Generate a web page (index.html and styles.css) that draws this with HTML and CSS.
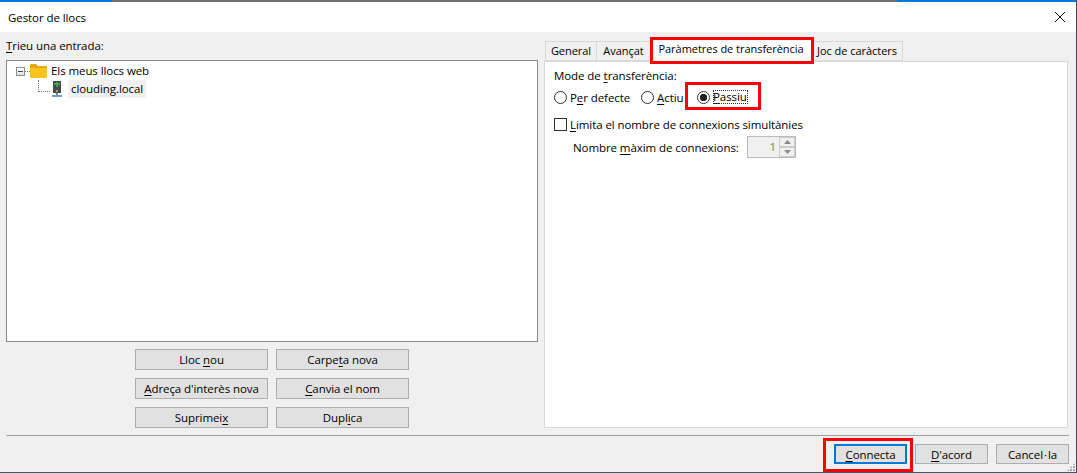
FILE: index.html
```html
<!DOCTYPE html>
<html lang="ca">
<head>
<meta charset="utf-8">
<title>Gestor de llocs</title>
<link rel="stylesheet" href="styles.css">
</head>
<body>
<div class="window">
  <div class="topline"><span class="topline-blue"></span><span class="topline-blue end"></span></div>
  <header class="titlebar">
    <span class="title">Gestor de llocs</span>
    <svg class="close" width="12" height="12" viewBox="0 0 12 12"><path d="M1 1L11 11M11 1L1 11" stroke="#111" stroke-width="1" fill="none"/></svg>
  </header>
  <div class="client">
    <div class="columns">
      <section class="left">
        <div class="label"><u>T</u>rieu una entrada:</div>
        <div class="tree">
          <div class="tree-row">
            <span class="expander"></span><span class="dots-h"></span>
            <svg class="folder" width="17" height="14" viewBox="0 0 17 14"><path d="M0 1a1 1 0 0 1 1-1h5l2 2h8a1 1 0 0 1 1 1v1H0z" fill="#e3a81c"/><path d="M0 4h17v9a1 1 0 0 1-1 1H1a1 1 0 0 1-1-1z" fill="#fcc11f"/></svg>
            <span class="tree-text">Els meus llocs web</span>
          </div>
          <div class="tree-row child">
            <span class="elbow"></span>
            <svg class="server" width="10" height="16" viewBox="0 0 10 16"><rect x="1" y="0" width="8" height="12" fill="#444b48"/><rect x="2" y="2" width="6" height="2" fill="#3fa24a"/><rect x="4" y="1" width="2" height="5" fill="#3fa24a"/><rect x="4" y="9" width="2" height="2" fill="#9aa09c"/><rect x="4" y="12" width="2" height="2" fill="#7b8a96"/><rect x="0" y="14" width="10" height="2" fill="#6d9fc9"/></svg>
            <span class="tree-text selected">clouding.local</span>
          </div>
        </div>
        <div class="site-buttons">
          <button class="btn">Lloc <u>n</u>ou</button>
          <button class="btn">Carpe<u>t</u>a nova</button>
          <button class="btn"><u>A</u>dreça d'interès nova</button>
          <button class="btn"><u>C</u>anvia el nom</button>
          <button class="btn">Suprimei<u>x</u></button>
          <button class="btn">Dupl<u>i</u>ca</button>
        </div>
      </section>
      <section class="right">
        <div class="tabs">
          <span class="tab t-general">General</span>
          <span class="tab t-avancat">Avançat</span>
          <span class="tab active">Paràmetres de transferència</span>
          <span class="tab t-joc">Joc de caràcters</span>
        </div>
        <div class="panel">
          <div class="label">Mode de <u>t</u>ransferència:</div>
          <div class="radios">
            <span class="option opt-1"><span class="radio"></span><span>P<u>e</u>r defecte</span></span>
            <span class="option opt-2"><span class="radio"></span><span><u>A</u>ctiu</span></span>
            <span class="option opt-3"><span class="radio checked"></span><span class="focus"><u>P</u>assiu</span></span>
          </div>
          <div class="option check-row"><span class="checkbox"></span><span><u>L</u>imita el nombre de connexions simultànies</span></div>
          <div class="spin-row">
            <span class="spin-label">Nombre <u>m</u>àxim de connexions:</span>
            <span class="spin">
              <span class="spin-value">1</span>
              <span class="spin-arrows">
                <span class="spin-btn"><svg width="7" height="4" viewBox="0 0 7 4"><path d="M3.5 0L7 4H0z" fill="#8a8a8a"/></svg></span>
                <span class="spin-btn"><svg width="7" height="4" viewBox="0 0 7 4"><path d="M0 0h7L3.5 4z" fill="#8a8a8a"/></svg></span>
              </span>
            </span>
          </div>
        </div>
      </section>
    </div>
    <footer class="footer">
      <button class="btn dlg default"><u>C</u>onnecta</button>
      <button class="btn dlg"><u>D</u>'acord</button>
      <button class="btn dlg">Cancel<span class="middot">·</span>la</button>
    </footer>
  </div>
  <span class="grip"></span>
  <span class="mark mark-tab"></span>
  <span class="mark mark-radio"></span>
  <span class="mark mark-connect"></span>
</div>
</body>
</html>
```
FILE: styles.css
```css
* { box-sizing: border-box; }
html, body { margin: 0; padding: 0; }
body { width: 1077px; height: 473px; overflow: hidden; background: #fff; font-family: "Open Sans", "Noto Sans", sans-serif; font-size: 11.5px; letter-spacing: -0.08px; color: #000; }
u { text-underline-offset: 2px; text-decoration-thickness: 1px; }
.window { position: relative; width: 1077px; height: 473px; display: flex; flex-direction: column; border-right: 1px solid #2f4f66; }
.topline { height: 2px; background: #6e6e6e; flex: none; display: flex; justify-content: space-between; }
.topline-blue { display: block; width: 112px; height: 2px; background: #0078d7; }
.topline-blue.end { width: 179px; }
.titlebar { height: 30px; flex: none; display: flex; align-items: center; justify-content: space-between; padding: 0 10px 0 8px; background: #fff; }
.client { flex: 1; min-height: 0; background: #f0f0f0; display: flex; flex-direction: column; border-bottom: 1px solid #2f5f78; padding-top: 6px; }
.columns { display: flex; flex: 1; min-height: 0; padding: 0 8px 0 6px; gap: 6px; }
.left { width: 532px; flex: none; display: flex; flex-direction: column; }
.left > .label { height: 22px; }
.tree { height: 282px; background: #fff; border: 1px solid #8a8a8a; padding: 1px 0 0 9px; }
.tree-row { display: flex; align-items: center; height: 18px; }
.expander { position: relative; width: 9px; height: 9px; border: 1px solid #8f8f8f; background: linear-gradient(#fff, #ddd); }
.expander::after { content: ""; position: absolute; left: 1px; top: 3px; width: 5px; height: 1px; background: #2a4a8a; }
.dots-h { width: 5px; border-top: 1px dotted #777; }
.folder { margin-right: 4px; }
.tree-text { line-height: 18px; }
.child { padding-left: 22px; }
.elbow { width: 12px; height: 12px; margin-top: -6px; border-left: 1px dotted #777; border-bottom: 1px dotted #777; margin-right: 2px; }
.server { margin-right: 6px; }
.selected { background: #f0f0f0; padding: 0 3px; }
.site-buttons { display: grid; grid-template-columns: 133px 133px; grid-auto-rows: 21px; gap: 8px; justify-content: center; padding-top: 7px; }
.btn { font: inherit; letter-spacing: inherit; color: inherit; background: #e1e1e1; border: 1px solid #adadad; padding: 0; margin: 0; }
.middot { margin: 0 1px; }
.right { flex: 1; min-width: 0; display: flex; flex-direction: column; }
.tabs { display: flex; height: 23px; align-items: flex-end; padding-left: 2px; font-size: 11px; letter-spacing: -0.04px; }
.tab { height: 20px; background: #f0f0f0; border: 1px solid #d9d9d9; margin-left: -1px; padding-bottom: 1px; display: flex; align-items: center; justify-content: center; line-height: 1; white-space: nowrap; }
.t-general { width: 52px; }
.t-avancat { width: 55px; }
.t-joc { width: 92px; }
.tab.active { width: 162px; height: 24px; background: #fff; border-bottom-color: #fff; padding-bottom: 4px; position: relative; margin-bottom: -1px; }
.panel { height: 367px; background: #fff; border: 1px solid #d9d9d9; padding: 6px 9px; }
.radios { display: flex; height: 20px; align-items: center; margin-top: 4px; }
.option { display: flex; align-items: center; gap: 3px; }
.opt-1 { width: 87px; }
.opt-2 { width: 56px; }
.radio { width: 13px; height: 13px; border: 1px solid #333; border-radius: 50%; background: #fff; flex: none; }
.radio.checked { background: radial-gradient(circle, #222 0 3.4px, #fff 4px); }
.focus { outline: 1px dotted #333; outline-offset: -1px; line-height: 14px; padding-right: 1px; }
.checkbox { width: 13px; height: 13px; border: 1px solid #333; background: #fff; flex: none; }
.check-row { margin-top: 7px; height: 20px; }
.spin-row { display: flex; align-items: center; margin-top: 2px; padding-left: 19px; height: 22px; }
.spin-label { width: 174px; flex: none; }
.spin { width: 49px; height: 22px; border: 1px solid #bbb; background: #f0f0f0; display: flex; }
.spin-value { flex: 1; text-align: right; padding-right: 3px; line-height: 20px; color: #777; }
.spin-arrows { width: 16px; display: flex; flex-direction: column; }
.spin-btn { flex: 1; background: #f0f0f0; border: 1px solid #ccc; display: flex; align-items: center; justify-content: center; }
.footer { margin: 6px 7px 0 6px; border-top: 1px solid #a0a0a0; height: 37px; flex: none; display: flex; justify-content: flex-end; align-items: flex-start; gap: 8px; padding: 8px 0 0; }
.dlg { width: 73px; height: 20px; }
.default { border: 2px solid #0078d7; }
.grip { position: absolute; right: 1px; bottom: 2px; width: 8px; height: 8px; background: radial-gradient(circle at 1px 1px, #a8a8a8 1px, transparent 1px) 0 0 / 3px 3px; clip-path: polygon(100% 0, 100% 100%, 0 100%); }
.mark { position: absolute; border: 3px solid #f00; pointer-events: none; }
.mark-tab { left: 650px; top: 37px; width: 164px; height: 27px; }
.mark-radio { left: 685px; top: 82px; width: 76px; height: 28px; }
.mark-connect { left: 823px; top: 438px; width: 90px; height: 34px; }
```
